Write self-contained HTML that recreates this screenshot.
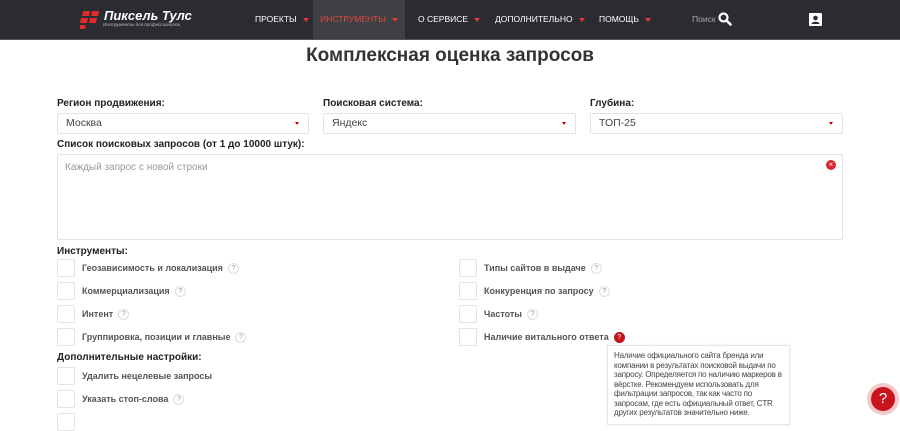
<!DOCTYPE html>
<html><head><meta charset="utf-8"><style>
*{box-sizing:border-box;margin:0;padding:0}
body{width:900px;height:418px;overflow:hidden;background:#fff;font-family:"Liberation Sans","DejaVu Sans",sans-serif;color:#333;position:relative}
.nav{position:absolute;left:0;top:0;width:900px;height:40px;background:#2a2c31;border-bottom:1px solid #555}
.nav .it{position:absolute;top:0;height:39px;line-height:39px;font-size:8.5px;color:#fff;white-space:nowrap}
.tri{display:inline-block;width:0;height:0;border-left:3px solid transparent;border-right:3px solid transparent;border-top:4px solid #e03a3a;margin-left:6px;vertical-align:middle}
.a{position:absolute}
h1{position:absolute;left:0;width:900px;top:45px;text-align:center;font-size:19px;font-weight:bold;color:#333}
.lbl{position:absolute;font-size:10px;font-weight:bold;color:#222}
.sel{position:absolute;height:21px;border:1px solid #e3e3e3;border-radius:2px;font-size:10.5px;line-height:19px;padding-left:8px;color:#444}
.sel:after{content:"";position:absolute;right:9px;top:8px;border-left:2px solid transparent;border-right:2px solid transparent;border-top:3px solid #c00}
.cb{position:absolute;width:18px;height:18px;border:1px solid #e3e3e3;border-radius:2px}
.ct{position:absolute;font-size:9px;font-weight:bold;color:#555}
.q{display:inline-block;width:11px;height:11px;border:1px solid #ddd;border-radius:50%;font-size:7px;line-height:9px;text-align:center;color:#999;margin-left:5px;vertical-align:middle;font-weight:normal}
</style></head><body>
<div class="nav">
 <svg class="a" style="left:80px;top:10px" width="20" height="20" viewBox="0 0 20 20"><path d="M3 1h7l-1 5H2zM12 1h7l-1 5h-7zM1 8h7l-1 5H0zM10 8h7l-1 5h-7zM0 15h6l-1 4H-1z" fill="#e02b2b"/></svg>
 <div class="a" style="left:104px;top:8px;color:#fff;font-size:13px;font-weight:bold;font-style:italic">Пиксель Тулс</div>
 <div class="a" style="left:103px;top:22px;color:#bbb;font-size:4.5px;font-style:italic">Инструменты для профессионалов</div>
 <div class="it" style="left:255px">ПРОЕКТЫ<span class="tri"></span></div>
 <div class="it" style="left:313px;width:92px;background:#3e4045;color:#e0483c;text-align:center">ИНСТРУМЕНТЫ<span class="tri"></span></div>
 <div class="it" style="left:418px">О СЕРВИСЕ<span class="tri"></span></div>
 <div class="it" style="left:495px">ДОПОЛНИТЕЛЬНО<span class="tri"></span></div>
 <div class="it" style="left:599px">ПОМОЩЬ<span class="tri"></span></div>
 <div class="it" style="left:692px;color:#aaa;font-size:8.5px">Поиск</div>
 <svg class="a" style="left:718px;top:12px" width="14" height="14" viewBox="0 0 14 14"><circle cx="5.5" cy="5.5" r="4" fill="none" stroke="#fff" stroke-width="2.2"/><path d="M8.5 8.5L12.5 12.5" stroke="#fff" stroke-width="2.6" stroke-linecap="round"/></svg>
 <svg class="a" style="left:809px;top:13px" width="13" height="13" viewBox="0 0 13 13"><rect width="13" height="13" rx="1" fill="#fff"/><circle cx="6.5" cy="5" r="2.3" fill="#2a2c31"/><path d="M2.5 11c0-3 8-3 8 0z" fill="#2a2c31"/></svg>
</div>
<h1>Комплексная оценка запросов</h1>
<div class="lbl" style="left:57px;top:98px">Регион продвижения:</div>
<div class="lbl" style="left:323px;top:98px">Поисковая система:</div>
<div class="lbl" style="left:590px;top:98px">Глубина:</div>
<div class="sel" style="left:57px;top:113px;width:252px">Москва</div>
<div class="sel" style="left:323px;top:113px;width:253px">Яндекс</div>
<div class="sel" style="left:590px;top:113px;width:253px">ТОП-25</div>
<div class="lbl" style="left:57px;top:139px">Список поисковых запросов (от 1 до 10000 штук):</div>
<div class="a" style="left:57px;top:154px;width:786px;height:86px;border:1px solid #e3e3e3;border-radius:2px"></div>
<div class="a" style="left:65px;top:162px;font-size:10px;color:#999">Каждый запрос с новой строки</div>
<div class="a" style="left:826px;top:160px;width:10px;height:10px;border-radius:50%;background:#d9262c;color:#fff;font-size:8px;line-height:10px;text-align:center">×</div>
<div class="lbl" style="left:57px;top:246px">Инструменты:</div>
<div class="cb" style="left:57px;top:259px"></div><div class="ct" style="left:82px;top:263px">Геозависимость и локализация<span class="q">?</span></div>
<div class="cb" style="left:57px;top:282px"></div><div class="ct" style="left:82px;top:286px">Коммерциализация<span class="q">?</span></div>
<div class="cb" style="left:57px;top:305px"></div><div class="ct" style="left:82px;top:309px">Интент<span class="q">?</span></div>
<div class="cb" style="left:57px;top:328px"></div><div class="ct" style="left:82px;top:332px">Группировка, позиции и главные<span class="q">?</span></div>
<div class="cb" style="left:459px;top:259px"></div><div class="ct" style="left:484px;top:263px">Типы сайтов в выдаче<span class="q">?</span></div>
<div class="cb" style="left:459px;top:282px"></div><div class="ct" style="left:484px;top:286px">Конкуренция по запросу<span class="q">?</span></div>
<div class="cb" style="left:459px;top:305px"></div><div class="ct" style="left:484px;top:309px">Частоты<span class="q">?</span></div>
<div class="cb" style="left:459px;top:328px"></div><div class="ct" style="left:484px;top:332px">Наличие витального ответа<span class="q" style="background:#c0141c;border-color:#c0141c;color:#fff">?</span></div>
<div class="lbl" style="left:57px;top:352px">Дополнительные настройки:</div>
<div class="cb" style="left:57px;top:367px"></div><div class="ct" style="left:82px;top:371px">Удалить нецелевые запросы</div>
<div class="cb" style="left:57px;top:390px"></div><div class="ct" style="left:82px;top:394px">Указать стоп-слова<span class="q">?</span></div>
<div class="cb" style="left:57px;top:413px"></div>
<div class="a" style="left:607px;top:345px;width:183px;height:80px;border:1px solid #e6e6e6;background:#fff;padding:5px 6px;font-size:8px;line-height:9.5px;color:#444;letter-spacing:-0.2px;box-shadow:0 0 3px rgba(0,0,0,.08)">Наличие официального сайта бренда или компании в результатах поисковой выдачи по запросу. Определяется по наличию маркеров в вёрстке. Рекомендуем использовать для фильтрации запросов, так как часто по запросам, где есть официальный ответ, CTR других результатов значительно ниже.</div>
<div class="a" style="left:867px;top:383px;width:32px;height:32px;border-radius:50%;background:#f3c9c9"></div>
<div class="a" style="left:871px;top:387px;width:24px;height:24px;border-radius:50%;background:#c8141c;color:#fff;font-size:15px;line-height:24px;text-align:center">?</div>
</body></html>
